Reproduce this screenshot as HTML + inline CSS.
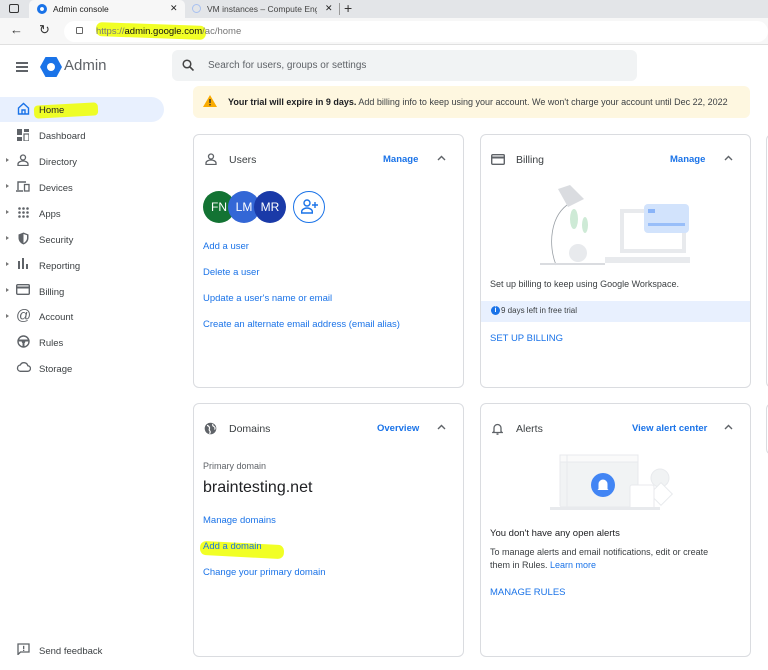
<!DOCTYPE html>
<html><head><meta charset="utf-8"><style>
*{box-sizing:border-box;margin:0;padding:0}
body{width:768px;height:670px;overflow:hidden;background:#fff;font-family:"Liberation Sans",Arial,sans-serif;color:#3c4043;position:relative}
.abs{position:absolute}
.tabbar{left:0;top:0;width:768px;height:18px;background:#e3e5e8}
.addr{left:0;top:18px;width:768px;height:27px;background:#f7f7f7;border-bottom:1px solid #e0e0e0}
.card{position:absolute;border:1px solid #dadce0;border-radius:6px;background:#fff}
.link{color:#1a73e8;font-size:10px;position:absolute}
.t{position:absolute;font-size:10px;white-space:nowrap}
.nav{position:absolute;left:39px;font-size:9.5px;color:#3c4043}
.arr{position:absolute;left:6px;width:0;height:0;border-left:3px solid #777;border-top:2.5px solid transparent;border-bottom:2.5px solid transparent}
.hl{background:#eeff00;opacity:.85}
.chev{position:absolute}
</style></head><body>
<div class="abs tabbar"></div>
<div class="abs" style="left:9px;top:4px;width:10px;height:9px;border:1.5px solid #333;border-radius:2px"></div>
<div class="abs" style="left:29px;top:0;width:156px;height:19px;background:#f7f7f7;border-radius:5px 5px 0 0"></div>
<div class="abs" style="left:37px;top:4px;width:10px;height:10px;border-radius:50%;background:#1a73e8;border:3px solid #1a73e8;box-shadow:inset 0 0 0 2px #fff"></div>
<div class="t" style="left:53px;top:4px;font-size:8.5px;color:#222">Admin console</div>
<div class="t" style="left:170px;top:3px;font-size:9px;color:#222">✕</div>
<div class="abs" style="left:192px;top:4px;width:9px;height:9px;border-radius:50%;border:1.5px solid #a8c0f0"></div>
<div class="t" style="left:207px;top:4px;font-size:8.5px;color:#444;width:110px;overflow:hidden">VM instances – Compute Engine</div>
<div class="t" style="left:325px;top:3px;font-size:9px;color:#222">✕</div>
<div class="abs" style="left:339px;top:3px;width:1px;height:12px;background:#999"></div>
<div class="t" style="left:344px;top:0;font-size:14px;color:#333">+</div>
<div class="abs addr"></div>
<div class="t" style="left:10px;top:22px;font-size:13px;color:#333">←</div>
<div class="t" style="left:39px;top:22px;font-size:13px;color:#333">↻</div>
<div class="abs" style="left:64px;top:21px;width:704px;height:21px;background:#fff;border-radius:11px"></div>
<div class="abs" style="left:76px;top:27px;width:7px;height:7px;border:1px solid #666;border-radius:1px"></div>
<div class="abs hl" style="left:96px;top:24px;width:110px;height:14px;border-radius:6px;transform:rotate(2deg)"></div>
<div class="t" style="left:96px;top:26px;font-size:9.5px;color:#777">https://<span style="color:#111">admin.google.com</span>/ac/home</div>

<div class="abs" style="left:16px;top:62px;width:12px;height:2px;background:#5f6368;box-shadow:0 4px 0 #5f6368,0 8px 0 #5f6368"></div>
<svg class="abs" style="left:40px;top:57px" width="22" height="20" viewBox="0 0 22 20"><polygon points="5.5,0 16.5,0 22,10 16.5,20 5.5,20 0,10" fill="#1a73e8"/><circle cx="11" cy="10" r="4" fill="#fff"/></svg>
<div class="t" style="left:64px;top:57px;font-size:15px;color:#5f6368">Admin</div>
<div class="abs" style="left:172px;top:50px;width:465px;height:31px;background:#f1f3f4;border-radius:6px"></div>
<svg class="abs" style="left:182px;top:59px" width="12" height="12" viewBox="0 0 12 12"><circle cx="5" cy="5" r="3.8" stroke="#444" stroke-width="1.5" fill="none"/><line x1="8" y1="8" x2="11.5" y2="11.5" stroke="#444" stroke-width="1.6"/></svg>
<div class="t" style="left:208px;top:60px;font-size:10px;color:#5f6368">Search for users, groups or settings</div>

<div class="abs" style="left:0;top:97px;width:164px;height:25px;background:#e8f0fe;border-radius:0 13px 13px 0"></div>
<div class="abs hl" style="left:34px;top:104px;width:64px;height:13px;border-radius:4px;transform:rotate(-3deg)"></div>
<svg class="abs" style="left:17px;top:102px" width="13" height="13" viewBox="0 0 13 13"><path d="M1.5 6L6.5 1.5 11.5 6V12H1.5Z M5 12V8h3v4" stroke="#1a73e8" stroke-width="1.4" fill="none"/></svg>
<div class="nav" style="top:105px;color:#202124">Home</div>
<svg class="abs" style="left:17px;top:129px" width="12" height="12" viewBox="0 0 12 12" fill="#5f6368"><rect x="0" y="0" width="5" height="6"/><rect x="7" y="0" width="5" height="3"/><rect x="0" y="8" width="5" height="4"/><rect x="7" y="5" width="5" height="7" fill="none" stroke="#5f6368" stroke-width="1.2"/></svg>
<div class="nav" style="top:131px">Dashboard</div>
<div class="arr" style="top:158px"></div><svg class="abs" style="left:17px;top:154px" width="12" height="12" viewBox="0 0 12 12"><circle cx="6" cy="3.5" r="2.5" stroke="#5f6368" stroke-width="1.3" fill="none"/><path d="M1 11.5v-1.5c0-2 3-3 5-3s5 1 5 3v1.5z" stroke="#5f6368" stroke-width="1.3" fill="none"/></svg>
<div class="nav" style="top:157px">Directory</div>
<div class="arr" style="top:184px"></div><svg class="abs" style="left:16px;top:181px" width="14" height="11" viewBox="0 0 14 11"><path d="M2 9V1h8" stroke="#5f6368" stroke-width="1.4" fill="none"/><line x1="0" y1="10" x2="7" y2="10" stroke="#5f6368" stroke-width="1.5"/><rect x="8.5" y="3.5" width="4.5" height="6.5" stroke="#5f6368" stroke-width="1.3" fill="none"/></svg>
<div class="nav" style="top:183px">Devices</div>
<div class="arr" style="top:210px"></div><svg class="abs" style="left:18px;top:207px" width="11" height="11" viewBox="0 0 11 11" fill="#5f6368"><circle cx="1.5" cy="1.5" r="1.3"/><circle cx="5.5" cy="1.5" r="1.3"/><circle cx="9.5" cy="1.5" r="1.3"/><circle cx="1.5" cy="5.5" r="1.3"/><circle cx="5.5" cy="5.5" r="1.3"/><circle cx="9.5" cy="5.5" r="1.3"/><circle cx="1.5" cy="9.5" r="1.3"/><circle cx="5.5" cy="9.5" r="1.3"/><circle cx="9.5" cy="9.5" r="1.3"/></svg>
<div class="nav" style="top:209px">Apps</div>
<div class="arr" style="top:236px"></div><svg class="abs" style="left:18px;top:232px" width="11" height="13" viewBox="0 0 11 13"><path d="M5.5 0.5L10.5 2.5V6c0 3-2.2 5.5-5 6.5C2.7 11.5 0.5 9 0.5 6V2.5Z" fill="#5f6368"/><path d="M5.5 2v9c2-1 3.5-3 3.5-5V3.3z" fill="#fff"/></svg>
<div class="nav" style="top:235px">Security</div>
<div class="arr" style="top:262px"></div><svg class="abs" style="left:18px;top:258px" width="11" height="11" viewBox="0 0 11 11" fill="#5f6368"><rect x="0" y="3" width="2" height="8"/><rect x="4" y="0" width="2" height="11"/><rect x="8" y="6" width="2" height="5"/></svg>
<div class="nav" style="top:261px">Reporting</div>
<div class="arr" style="top:288px"></div><svg class="abs" style="left:16px;top:284px" width="14" height="11" viewBox="0 0 14 11"><rect x="0.7" y="0.7" width="12.6" height="9.6" rx="1" stroke="#5f6368" stroke-width="1.4" fill="none"/><rect x="1" y="2.5" width="12" height="2" fill="#5f6368"/></svg>
<div class="nav" style="top:287px">Billing</div>
<div class="arr" style="top:314px"></div><div class="t" style="left:16px;top:307px;font-size:15px;color:#5f6368">@</div>
<div class="nav" style="top:312px">Account</div>
<svg class="abs" style="left:17px;top:335px" width="13" height="13" viewBox="0 0 13 13"><circle cx="6.5" cy="6.5" r="5.5" stroke="#5f6368" stroke-width="1.4" fill="none"/><path d="M1.5 5.5h10M6.5 6.5v5" stroke="#5f6368" stroke-width="2"/><circle cx="6.5" cy="6.5" r="1.8" fill="#5f6368"/></svg>
<div class="nav" style="top:338px">Rules</div>
<svg class="abs" style="left:16px;top:362px" width="15" height="10" viewBox="0 0 15 10"><path d="M4 9.3h7.5a2.8 2.8 0 0 0 .3-5.6A4 4 0 0 0 4.3 3 3.2 3.2 0 0 0 4 9.3z" stroke="#5f6368" stroke-width="1.3" fill="none"/></svg>
<div class="nav" style="top:364px">Storage</div>
<svg class="abs" style="left:17px;top:643px" width="13" height="12" viewBox="0 0 13 12"><path d="M1 1h11v8H3.5L1 11.5z" stroke="#5f6368" stroke-width="1.3" fill="none"/><rect x="6" y="2.8" width="1.3" height="3.3" fill="#5f6368"/><rect x="6" y="6.8" width="1.3" height="1.2" fill="#5f6368"/></svg>
<div class="nav" style="top:646px">Send feedback</div>

<div class="abs" style="left:193px;top:86px;width:557px;height:32px;background:#fef7e0;border-radius:6px"></div>
<svg class="abs" style="left:203px;top:95px" width="14" height="12" viewBox="0 0 14 12"><polygon points="7,0 14,12 0,12" fill="#f9ab00"/><rect x="6.3" y="4" width="1.4" height="4" fill="#333"/><rect x="6.3" y="9" width="1.4" height="1.4" fill="#333"/></svg>
<div class="t" style="left:228px;top:97px;font-size:9px;color:#3c4043"><b style="color:#202124">Your trial will expire in 9 days.</b> Add billing info to keep using your account. We won't charge your account until Dec 22, 2022</div>

<div class="card" style="left:193px;top:134px;width:271px;height:254px"></div>
<svg class="abs" style="left:205px;top:153px" width="12" height="12" viewBox="0 0 12 12"><circle cx="6" cy="3.5" r="2.5" stroke="#5f6368" stroke-width="1.3" fill="none"/><path d="M1 11.5v-1.5c0-2 3-3 5-3s5 1 5 3v1.5z" stroke="#5f6368" stroke-width="1.3" fill="none"/></svg>
<div class="t" style="left:229px;top:154px;font-size:10.5px;color:#3c4043">Users</div>
<div class="link" style="left:383px;top:154px;font-weight:bold;font-size:9.5px">Manage</div>
<svg class="chev" style="left:437px;top:155px" width="9" height="6" viewBox="0 0 9 6"><path d="M1 5L4.5 1.5 8 5" stroke="#5f6368" stroke-width="1.4" fill="none"/></svg>
<div class="abs" style="left:203px;top:191px;width:32px;height:32px;border-radius:50%;background:#137333;color:#fff;font-size:12px;line-height:32px;text-align:center">FN</div>
<div class="abs" style="left:228px;top:191px;width:32px;height:32px;border-radius:50%;background:#3367d6;color:#fff;font-size:12px;line-height:32px;text-align:center">LM</div>
<div class="abs" style="left:254px;top:191px;width:32px;height:32px;border-radius:50%;background:#1a3aa8;color:#fff;font-size:12px;line-height:32px;text-align:center">MR</div>
<div class="abs" style="left:293px;top:191px;width:32px;height:32px;border-radius:50%;border:1.3px solid #1a73e8"></div>
<svg class="abs" style="left:301px;top:199px" width="18" height="15" viewBox="0 0 18 15"><circle cx="6" cy="4" r="3" stroke="#1a73e8" stroke-width="1.4" fill="none"/><path d="M0.7 14v-1.5c0-2 3-3.5 5.3-3.5s5.3 1.5 5.3 3.5V14z" stroke="#1a73e8" stroke-width="1.4" fill="none"/><path d="M14 3v6M11 6h6" stroke="#1a73e8" stroke-width="1.4"/></svg>
<div class="link" style="left:203px;top:241px;font-size:9.5px">Add a user</div>
<div class="link" style="left:203px;top:267px;font-size:9.5px">Delete a user</div>
<div class="link" style="left:203px;top:293px;font-size:9.5px">Update a user's name or email</div>
<div class="link" style="left:203px;top:319px;font-size:9.5px">Create an alternate email address (email alias)</div>

<div class="card" style="left:480px;top:134px;width:271px;height:254px"></div>
<svg class="abs" style="left:491px;top:154px" width="14" height="11" viewBox="0 0 14 11"><rect x="0.7" y="0.7" width="12.6" height="9.6" rx="1" stroke="#5f6368" stroke-width="1.4" fill="none"/><rect x="1" y="2.5" width="12" height="2" fill="#5f6368"/></svg>
<div class="t" style="left:516px;top:154px;font-size:10.5px">Billing</div>
<div class="link" style="left:670px;top:154px;font-weight:bold;font-size:9.5px">Manage</div>
<svg class="chev" style="left:724px;top:155px" width="9" height="6" viewBox="0 0 9 6"><path d="M1 5L4.5 1.5 8 5" stroke="#5f6368" stroke-width="1.4" fill="none"/></svg>
<svg class="abs" style="left:540px;top:185px" width="150" height="82" viewBox="0 0 150 82"><path d="M16 80C8 60 10 30 30 18" stroke="#9aa0a6" stroke-width="0.8" fill="none"/><path d="M18 4l12 -4 14 14-16 8z" fill="#dadce0"/><rect x="82" y="26" width="62" height="40" fill="none" stroke="#e8eaed" stroke-width="4"/><rect x="65" y="72" width="128" height="6" fill="#e8eaed"/><ellipse cx="34" cy="34" rx="4" ry="10" fill="#ceead6"/><ellipse cx="45" cy="40" rx="3" ry="8" fill="#ceead6"/><circle cx="38" cy="68" r="9" fill="#e8eaed"/><rect x="0" y="78" width="65" height="2" fill="#dadce0"/><rect x="104" y="19" width="45" height="29" rx="4" fill="#d2e3fc"/><rect x="108" y="24" width="7" height="4" fill="#8ab4f8"/><rect x="108" y="38" width="37" height="3" fill="#8ab4f8" opacity=".8"/></svg>
<div class="t" style="left:490px;top:279px;font-size:9px">Set up billing to keep using Google Workspace.</div>
<div class="abs" style="left:481px;top:301px;width:269px;height:21px;background:#e8f0fe"></div>
<div class="abs" style="left:491px;top:306px;width:9px;height:9px;border-radius:50%;background:#1a73e8;color:#fff;font-size:7px;line-height:9px;text-align:center;font-weight:bold">i</div>
<div class="t" style="left:501px;top:306px;font-size:8px">9 days left in free trial</div>
<div class="link" style="left:490px;top:333px;font-size:9.5px;color:#1a73e8">SET UP BILLING</div>

<div class="card" style="left:766px;top:134px;width:20px;height:254px"></div>
<div class="card" style="left:766px;top:403px;width:20px;height:52px"></div>

<div class="card" style="left:193px;top:403px;width:271px;height:254px"></div>
<svg class="abs" style="left:204px;top:422px" width="13" height="13" viewBox="0 0 13 13"><circle cx="6.5" cy="6.5" r="5.8" fill="#5f6368"/><path d="M3 3.5c1.5 0 2 1 2.5 2s-1 2 0 3 1 2 0 3.3M9 2c-1 1 0 2 1 2.5s1.5 2 .5 3" stroke="#fff" stroke-width="1.2" fill="none"/></svg>
<div class="t" style="left:229px;top:423px;font-size:10.5px">Domains</div>
<div class="link" style="left:377px;top:423px;font-weight:bold;font-size:9.5px">Overview</div>
<svg class="chev" style="left:437px;top:424px" width="9" height="6" viewBox="0 0 9 6"><path d="M1 5L4.5 1.5 8 5" stroke="#5f6368" stroke-width="1.4" fill="none"/></svg>
<div class="t" style="left:203px;top:461px;font-size:9px;color:#5f6368">Primary domain</div>
<div class="t" style="left:203px;top:479px;font-size:16px;color:#202124">braintesting.net</div>
<div class="link" style="left:203px;top:515px;font-size:9.5px">Manage domains</div>
<div class="abs hl" style="left:200px;top:543px;width:84px;height:14px;border-radius:6px;transform:rotate(3deg)"></div>
<div class="link" style="left:203px;top:541px;font-size:9.5px">Add a domain</div>
<div class="link" style="left:203px;top:567px;font-size:9.5px">Change your primary domain</div>

<div class="card" style="left:480px;top:403px;width:271px;height:254px"></div>
<svg class="abs" style="left:492px;top:422px" width="11" height="13" viewBox="0 0 11 13"><path d="M2 9.5V6a3.5 3.5 0 0 1 7 0v3.5l1.2 1H0.8z" stroke="#5f6368" stroke-width="1.3" fill="none"/><rect x="4.5" y="11.3" width="2" height="1.5" fill="#5f6368"/></svg>
<div class="t" style="left:516px;top:423px;font-size:10.5px">Alerts</div>
<div class="link" style="left:632px;top:423px;font-weight:bold;font-size:9.5px">View alert center</div>
<svg class="chev" style="left:724px;top:424px" width="9" height="6" viewBox="0 0 9 6"><path d="M1 5L4.5 1.5 8 5" stroke="#5f6368" stroke-width="1.4" fill="none"/></svg>
<svg class="abs" style="left:550px;top:452px" width="130" height="58" viewBox="0 0 130 58"><rect x="10" y="3" width="78" height="52" rx="2" fill="#f1f3f4" stroke="#e8eaed"/><rect x="10" y="3" width="78" height="7" fill="#fafafa" stroke="#e8eaed"/><line x1="17" y1="3" x2="17" y2="55" stroke="#e8eaed"/><circle cx="53" cy="33" r="12" fill="#4285f4"/><path d="M48.5 37v-5a4.5 4.5 0 0 1 9 0v5l1 1h-11z" fill="#fff"/><circle cx="110" cy="26" r="9" fill="#f1f3f4" stroke="#e8eaed"/><rect x="103" y="34" width="16" height="16" transform="rotate(45 111 42)" fill="#fff" stroke="#e8eaed"/><rect x="80" y="33" width="24" height="24" rx="2" fill="#fff" stroke="#e8eaed"/><rect x="0" y="55" width="110" height="3" fill="#e8eaed"/></svg>
<div class="t" style="left:490px;top:528px;font-size:9.5px;color:#202124">You don't have any open alerts</div>
<div class="t" style="left:490px;top:546px;font-size:9px;line-height:13px">To manage alerts and email notifications, edit or create<br>them in Rules. <span style="color:#1a73e8">Learn more</span></div>
<div class="link" style="left:490px;top:587px;font-size:9.5px">MANAGE RULES</div>
</body></html>
